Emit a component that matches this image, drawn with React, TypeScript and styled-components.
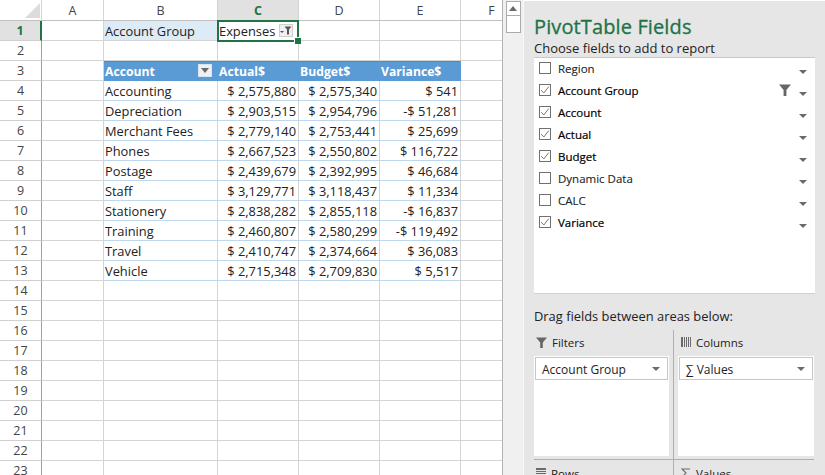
import React from "react";
import styled, { createGlobalStyle } from "styled-components";

const Global = createGlobalStyle`
  html, body { margin: 0; padding: 0; width: 825px; height: 475px; overflow: hidden; background: #fff; }
  * { box-sizing: border-box; }
  body { font-family: "Open Sans", "Noto Sans", sans-serif; font-size: 12.5px; color: #222; }
`;

const Page = styled.div`
  display: flex;
  width: 825px;
  height: 475px;
  overflow: hidden;
`;

const Sheet = styled.div`
  display: grid;
  grid-template-columns: 42px 62px 114px 81px 81px 81px 62px;
  grid-template-rows: 21px;
  grid-auto-rows: 20px;
  width: 503px;
  height: 475px;
  overflow: hidden;
  border-right: 1px solid #b4b4b4;
  flex: none;
`;

const Corner = styled.div`
  position: relative;
  background: #fff;
  border-right: 1px solid #d4d4d4;
  border-bottom: 1px solid #c0c0c0;
  &::after {
    content: "";
    position: absolute;
    right: 1px;
    bottom: 2px;
    border-style: solid;
    border-width: 0 0 15px 15px;
    border-color: transparent transparent #dcdcdc transparent;
  }
`;

const ColHead = styled.div<{ $active?: boolean }>`
  display: flex;
  align-items: center;
  justify-content: center;
  font-size: 12.5px;
  background: ${(p) => (p.$active ? "#e1e1e1" : "#fff")};
  color: ${(p) => (p.$active ? "#217346" : "#444")};
  font-weight: ${(p) => (p.$active ? 700 : 400)};
  border-right: 1px solid #d4d4d4;
  border-bottom: 1px solid ${(p) => (p.$active ? "#217346" : "#c0c0c0")};
`;

const RowHead = styled.div<{ $active?: boolean }>`
  display: flex;
  align-items: center;
  justify-content: center;
  font-size: 12.5px;
  background: ${(p) => (p.$active ? "#e1e1e1" : "#fff")};
  color: ${(p) => (p.$active ? "#217346" : "#444")};
  font-weight: ${(p) => (p.$active ? 700 : 400)};
  border-right: ${(p) => (p.$active ? "2px solid #217346" : "1px solid #9f9f9f")};
  border-bottom: 1px solid #d0d0d0;
`;

type CellKind = "plain" | "label" | "head" | "body";

const Cell = styled.div<{ $kind?: CellKind; $right?: boolean }>`
  position: relative;
  display: flex;
  align-items: center;
  justify-content: ${(p) => (p.$right ? "flex-end" : "flex-start")};
  padding: 1px 2px 0 1px;
  white-space: nowrap;
  overflow: visible;
  font-size: ${(p) => (p.$kind === "head" ? "12.2px" : "12.85px")};
  color: ${(p) => (p.$kind === "head" ? "#fff" : "#222")};
  font-weight: ${(p) => (p.$kind === "head" ? 700 : 400)};
  background: ${(p) =>
    p.$kind === "head" ? "#5b9bd5" : p.$kind === "label" ? "#ddebf7" : "#fff"};
  border-right: 1px solid ${(p) => (p.$kind === "head" || p.$kind === "label" ? "transparent" : "#d4d4d4")};
  border-bottom: 1px solid ${(p) => (p.$kind === "body" ? "#bdd7ee" : "#d4d4d4")};
  ${(p) => (p.$kind === "head" ? "border-top: 1px solid #4a8ac8; border-bottom-color: #5b9bd5;" : "")}
`;

const Selection = styled.div`
  position: absolute;
  left: -1px;
  top: -1px;
  width: 82px;
  height: 22px;
  border: 2px solid #217346;
  z-index: 2;
  &::after {
    content: "";
    position: absolute;
    right: -4px;
    bottom: -4px;
    width: 6px;
    height: 6px;
    background: #217346;
    border: 1px solid #fff;
    border-right: 0;
    border-bottom: 0;
  }
`;

const CellButton = styled.span<{ $light?: boolean }>`
  position: absolute;
  right: 5px;
  top: ${(p) => (p.$light ? "3px" : "2px")};
  width: 14px;
  height: 13px;
  display: flex;
  align-items: center;
  justify-content: center;
  background: #f0f0f0;
  border: 1px solid ${(p) => (p.$light ? "#cfcfcf" : "#d8e6f2")};
`;

const Scrollbar = styled.div`
  width: 21px;
  flex: none;
  background: #f0f0f0;
  border-right: 1px solid #f7f7f7;
  display: flex;
  flex-direction: column;
  align-items: center;
  padding-top: 1px;
`;

const ScrollButton = styled.div`
  width: 15px;
  height: 15px;
  background: #fff;
  border: 1px solid #ababab;
  display: flex;
  align-items: center;
  justify-content: center;
`;

const ScrollThumb = styled.div`
  width: 15px;
  height: 17px;
  background: #fff;
  border: 1px solid #ababab;
  border-top: 0;
`;

const Pane = styled.aside`
  flex: 1;
  min-width: 0;
  height: 475px;
  background: #e6e6e6;
  border-top: 1px solid #fff;
  padding: 12px 10px 0 10px;
  overflow: hidden;
`;

const Title = styled.h1`
  margin: 0;
  font-size: 20px;
  line-height: 27px;
  font-weight: 400;
  color: #217346;
  -webkit-text-stroke: 0.3px #217346;
  letter-spacing: 0.12px;
`;

const Subtitle = styled.div`
  font-size: 13px;
  line-height: 17px;
  color: #222;
`;

const FieldList = styled.div`
  height: 237px;
  background: #fff;
  border-top: 1px solid #c8c8c8;
  border-bottom: 1px solid #d0d0d0;
  display: flex;
  flex-direction: column;
`;

const FieldRow = styled.div`
  display: flex;
  align-items: center;
  height: 22px;
  flex: none;
  padding-left: 5px;
  padding-right: 8px;
  position: relative;
  top: -1px;
`;

const Check = styled.span`
  width: 12px;
  height: 12px;
  flex: none;
  background: #fff;
  border: 1px solid #707070;
  margin-right: 7px;
  display: flex;
  align-items: center;
  justify-content: center;
`;

const FieldName = styled.span<{ $on?: boolean }>`
  flex: 1;
  white-space: nowrap;
  font-size: 11.5px;
  color: ${(p) => (p.$on ? "#000" : "#222")};
  -webkit-text-stroke: ${(p) => (p.$on ? "0.2px #000" : "0.1px #222")};
`;

const FieldCaret = styled.span`
  width: 0;
  height: 0;
  margin-top: 7px;
  margin-left: 8px;
  border-style: solid;
  border-width: 4px 4px 0 4px;
  border-color: #6a6a6a transparent transparent transparent;
`;

const DragLabel = styled.div`
  margin-top: 13px;
  font-size: 12.9px;
  line-height: 18px;
  color: #222;
`;

const Areas = styled.div`
  display: grid;
  grid-template-columns: 140px 140px;
  grid-auto-rows: auto;
  margin-top: 5px;
`;

const Area = styled.section<{ $second?: boolean; $last?: boolean }>`
  height: ${(p) => (p.$last ? "40px" : "130px")};
  padding-top: ${(p) => (p.$last ? "1px" : "0")};
  padding-left: ${(p) => (p.$second ? "4px" : "0")};
  padding-right: ${(p) => (p.$second ? "0" : "4px")};
  border-right: ${(p) => (p.$second ? "0" : "1px solid #b0b0b0")};
  border-bottom: ${(p) => (p.$last ? "0" : "1px solid #b0b0b0")};
  display: flex;
  flex-direction: column;
`;

const AreaHead = styled.div<{ $second?: boolean }>`
  display: flex;
  align-items: center;
  gap: 5px;
  height: 26px;
  flex: none;
  padding-left: ${(p) => (p.$second ? "3px" : "2px")};
  padding-bottom: 2px;
  font-size: 11.5px;
  color: #222;
`;

const AreaBody = styled.div`
  height: 100px;
  background: #fff;
  padding: 1px;
  flex: none;
`;

const Pill = styled.div`
  height: 23px;
  display: flex;
  align-items: center;
  justify-content: space-between;
  border: 1px solid #c6c6c6;
  padding: 1px 7px 0 6px;
  font-size: 12px;
  color: #222;
`;

const PillCaret = styled.span`
  width: 0;
  height: 0;
  border-style: solid;
  border-width: 4px 4px 0 4px;
  border-color: #6a6a6a transparent transparent transparent;
`;

const CheckMark = () => (
  <svg width="10" height="10" viewBox="0 0 10 10">
    <path d="M1.2 5.2 L3.8 8 L8.8 1.6" fill="none" stroke="#777" strokeWidth="1" />
  </svg>
);

const Funnel = ({ size = 11, color = "#666" }: { size?: number; color?: string }) => (
  <svg width={size} height={size} viewBox="0 0 11 11">
    <path d="M0 0.5 H11 L6.8 5.5 V11 H4.2 V5.5 Z" fill={color} />
  </svg>
);

const FilterGlyph = () => (
  <svg width="12" height="9" viewBox="0 0 12 9">
    <path d="M0 5 H4 L2 7 Z" fill="#555" />
    <path d="M4.5 0.5 H11.5 L9 3.5 V8.5 H7 V3.5 Z" fill="#555" />
  </svg>
);

const ColumnsIcon = () => (
  <svg width="10" height="10" viewBox="0 0 10 10">
    <path d="M0 0h2v10H0zM3 0h1v10H3zM5 0h1v10H5zM7 0h1v10H7zM9 0h1v10H9z" fill="#6a6a6a" />
  </svg>
);

const RowsIcon = () => (
  <svg width="10" height="10" viewBox="0 0 10 10">
    <path d="M0 0h10v2H0zM0 3h10v1H0zM0 5h10v1H0zM0 7h10v1H0z" fill="#6a6a6a" />
  </svg>
);

const SigmaIcon = () => (
  <svg width="10" height="10" viewBox="0 0 10 10">
    <path d="M9 1 H1 L5 5 L1 9 H9" fill="none" stroke="#6a6a6a" strokeWidth="1.1" />
  </svg>
);

const Triangle = ({ up }: { up?: boolean }) => (
  <svg width="8" height="5" viewBox="0 0 8 5">
    <path d={up ? "M0 5 L4 0 L8 5 Z" : "M0 0 L8 0 L4 5 Z"} fill="#6a6a6a" />
  </svg>
);

const data: [string, string, string, string][] = [
  ["Accounting", "$ 2,575,880", "$ 2,575,340", "$ 541"],
  ["Depreciation", "$ 2,903,515", "$ 2,954,796", "-$ 51,281"],
  ["Merchant Fees", "$ 2,779,140", "$ 2,753,441", "$ 25,699"],
  ["Phones", "$ 2,667,523", "$ 2,550,802", "$ 116,722"],
  ["Postage", "$ 2,439,679", "$ 2,392,995", "$ 46,684"],
  ["Staff", "$ 3,129,771", "$ 3,118,437", "$ 11,334"],
  ["Stationery", "$ 2,838,282", "$ 2,855,118", "-$ 16,837"],
  ["Training", "$ 2,460,807", "$ 2,580,299", "-$ 119,492"],
  ["Travel", "$ 2,410,747", "$ 2,374,664", "$ 36,083"],
  ["Vehicle", "$ 2,715,348", "$ 2,709,830", "$ 5,517"],
];

const fields: { name: string; on: boolean; filter?: boolean }[] = [
  { name: "Region", on: false },
  { name: "Account Group", on: true, filter: true },
  { name: "Account", on: true },
  { name: "Actual", on: true },
  { name: "Budget", on: true },
  { name: "Dynamic Data", on: false },
  { name: "CALC", on: false },
  { name: "Variance", on: true },
];

const columns = ["A", "B", "C", "D", "E", "F"];
const emptyRows = Array.from({ length: 10 }, (_, i) => i + 14);

const EmptyCells = ({ count }: { count: number }) => (
  <>
    {Array.from({ length: count }, (_, i) => (
      <Cell key={i} />
    ))}
  </>
);

export default function App() {
  return (
    <Page>
      <Global />
      <Sheet>
        <Corner />
        {columns.map((c) => (
          <ColHead key={c} $active={c === "C"}>{c}</ColHead>
        ))}

        <RowHead $active>1</RowHead>
        <Cell />
        <Cell $kind="label">Account Group</Cell>
        <Cell>
          Expenses
          <CellButton $light><FilterGlyph /></CellButton>
          <Selection />
        </Cell>
        <EmptyCells count={3} />

        <RowHead>2</RowHead>
        <EmptyCells count={6} />

        <RowHead>3</RowHead>
        <Cell />
        <Cell $kind="head">
          Account
          <CellButton><Triangle /></CellButton>
        </Cell>
        <Cell $kind="head">Actual$</Cell>
        <Cell $kind="head">Budget$</Cell>
        <Cell $kind="head">Variance$</Cell>
        <Cell />

        {data.map((r, i) => (
          <React.Fragment key={r[0]}>
            <RowHead>{i + 4}</RowHead>
            <Cell />
            <Cell $kind="body">{r[0]}</Cell>
            <Cell $kind="body" $right>{r[1]}</Cell>
            <Cell $kind="body" $right>{r[2]}</Cell>
            <Cell $kind="body" $right>{r[3]}</Cell>
            <Cell />
          </React.Fragment>
        ))}

        {emptyRows.map((n) => (
          <React.Fragment key={n}>
            <RowHead>{n}</RowHead>
            <EmptyCells count={6} />
          </React.Fragment>
        ))}
      </Sheet>

      <Scrollbar>
        <ScrollButton><Triangle up /></ScrollButton>
        <ScrollThumb />
      </Scrollbar>

      <Pane>
        <Title>PivotTable Fields</Title>
        <Subtitle>Choose fields to add to report</Subtitle>
        <FieldList>
          {fields.map((f) => (
            <FieldRow key={f.name}>
              <Check>{f.on && <CheckMark />}</Check>
              <FieldName $on={f.on}>{f.name}</FieldName>
              {f.filter && <Funnel size={12} />}
              <FieldCaret />
            </FieldRow>
          ))}
        </FieldList>
        <DragLabel>Drag fields between areas below:</DragLabel>
        <Areas>
          <Area>
            <AreaHead><Funnel /> Filters</AreaHead>
            <AreaBody>
              <Pill>Account Group <PillCaret /></Pill>
            </AreaBody>
          </Area>
          <Area $second>
            <AreaHead $second><ColumnsIcon /> Columns</AreaHead>
            <AreaBody>
              <Pill>∑ Values <PillCaret /></Pill>
            </AreaBody>
          </Area>
          <Area $last>
            <AreaHead><RowsIcon /> Rows</AreaHead>
          </Area>
          <Area $second $last>
            <AreaHead $second><SigmaIcon /> Values</AreaHead>
          </Area>
        </Areas>
      </Pane>
    </Page>
  );
}
